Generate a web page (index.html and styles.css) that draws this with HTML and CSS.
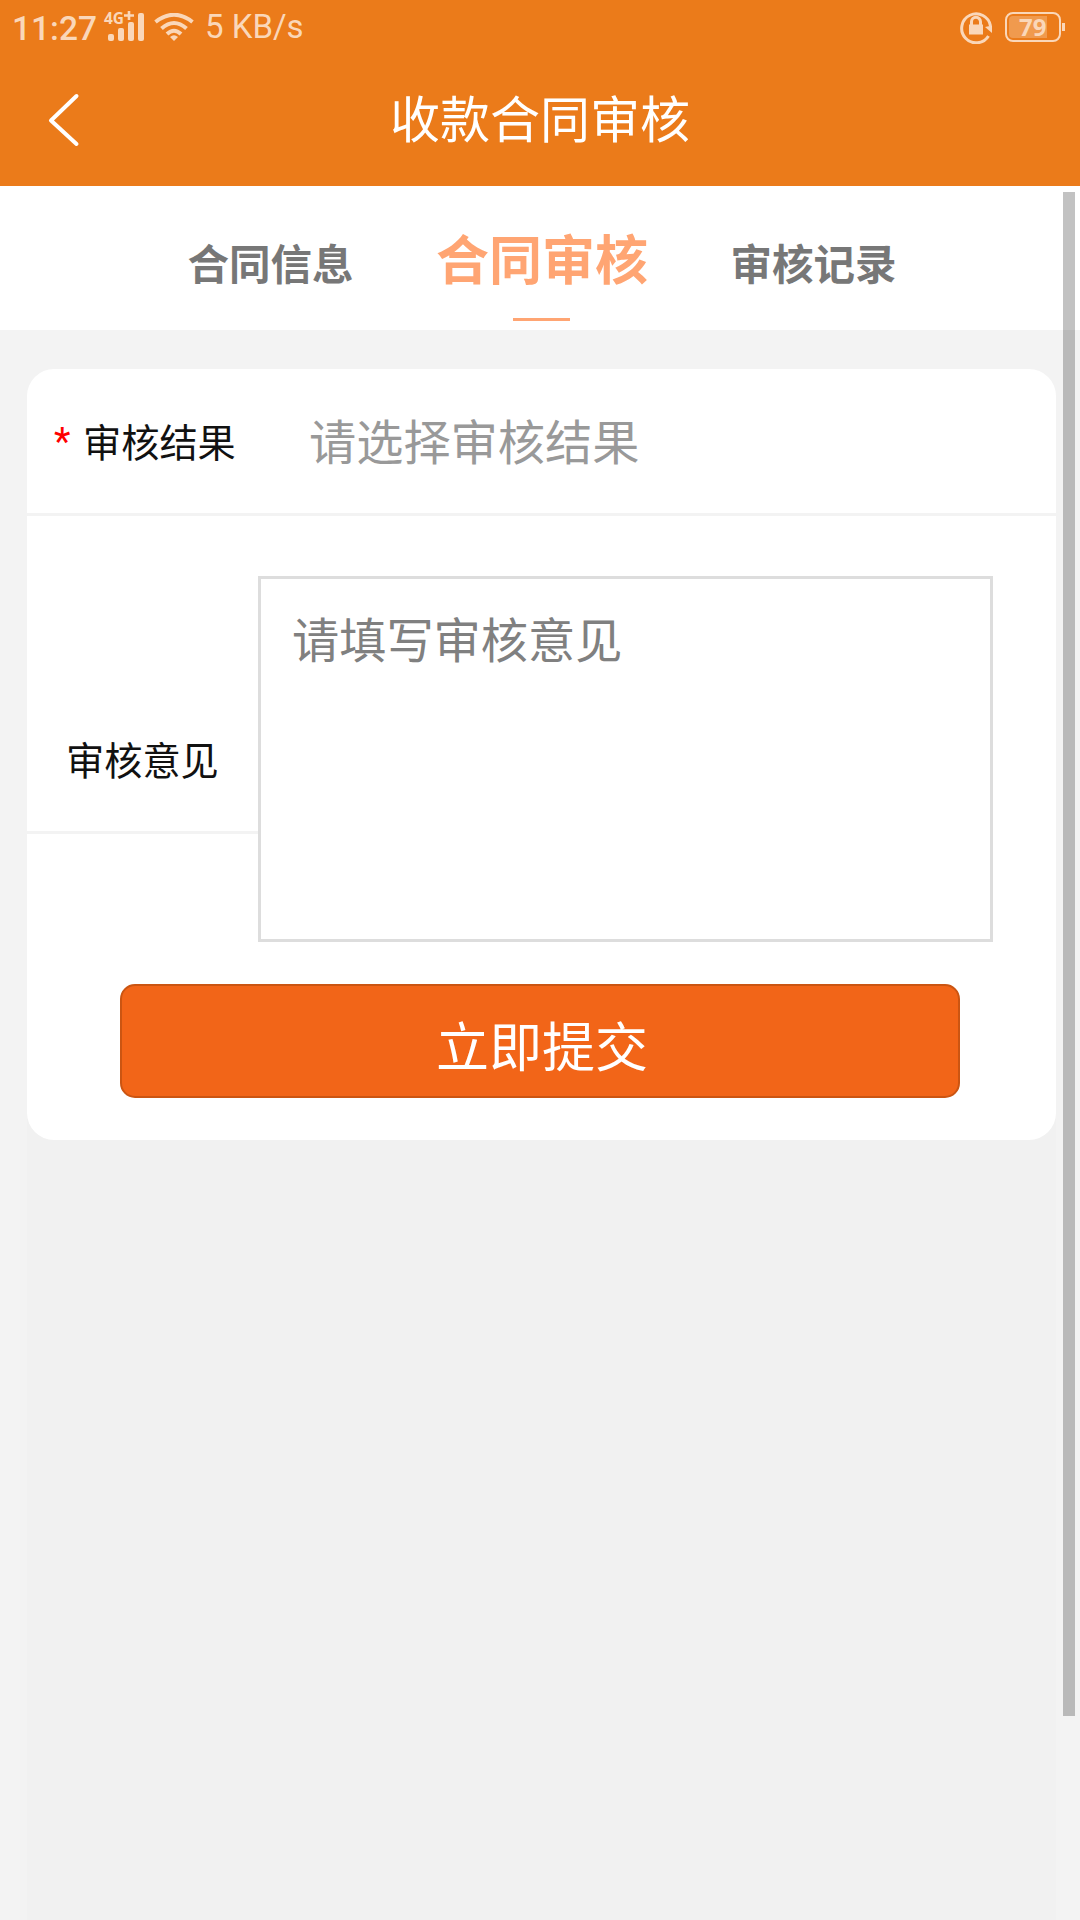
FILE: index.html
```html
<!DOCTYPE html>
<html lang="zh-CN">
<head>
<meta charset="UTF-8">
<title>收款合同审核</title>
<link rel="stylesheet" href="styles.css">
</head>
<body>
<header class="header">
  <div class="status">
    <span class="clock">11:27</span>
    <svg class="signal" width="42" height="32" viewBox="0 0 42 32" fill="currentColor">
      <text class="network" x="0" y="12.500" textLength="20" lengthAdjust="spacingAndGlyphs">4G</text>
      <path d="M20 3.200h10v2.600H20zM23.700 0h2.600v9h-2.600z"/>
      <rect x="4" y="23" width="6" height="7" rx="2"/>
      <rect x="14" y="17" width="6" height="13" rx="2"/>
      <rect x="24" y="11" width="6" height="19" rx="2"/>
      <rect x="34" y="2" width="6" height="28" rx="2"/>
    </svg>
    <svg class="wifi" width="40" height="28" viewBox="0 0 40 28" fill="none" stroke="currentColor" stroke-width="4">
      <path d="M1.500 9Q20 -5.500 38.500 9M7.500 15.500Q20 4.500 32.500 15.500M13 21Q20 14.500 27 21"/>
      <path d="M20 28l-4-4q4-3.600 8 0z" fill="currentColor" stroke="none"/>
    </svg>
    <span class="speed">5 KB/s</span>
    <svg class="lock" width="33" height="33" viewBox="0 0 33 33" fill="none" stroke="currentColor">
      <path d="M28.500 25A14.500 14.500 0 1 1 30.500 15" stroke-width="3"/>
      <path d="M25 16l7-1.500V22z" fill="currentColor" stroke="none"/>
      <path d="M11.500 14v-3.200a4.500 4.500 0 0 1 9 0V14" stroke-width="3"/>
      <rect x="9" y="13.500" width="14" height="10" fill="currentColor" stroke="none"/>
    </svg>
    <div class="battery"><span class="level">79</span></div>
  </div>
  <div class="navbar">
    <svg class="back" width="34" height="54" viewBox="0 0 34 54" fill="none" stroke="#fff" stroke-width="4" stroke-linecap="round" stroke-linejoin="round">
      <path d="M29.500 3L4 27.500L29.500 51"/>
    </svg>
    <h1 class="title">收款合同审核</h1>
  </div>
</header>
<nav class="tabs">
  <a class="tab">合同信息</a>
  <a class="tab active">合同审核</a>
  <a class="tab">审核记录</a>
</nav>
<main class="page">
  <div class="panel">
    <form class="card">
      <div class="row">
        <label class="label required">审核结果</label>
        <span class="select">请选择审核结果</span>
      </div>
      <div class="row opinion">
        <label class="label">审核意见</label>
        <div class="textarea">请填写审核意见</div>
      </div>
      <button class="submit" type="button">立即提交</button>
    </form>
  </div>
</main>
<div class="scrollbar"></div>
</body>
</html>
```
FILE: styles.css
```css
* { box-sizing: border-box; }

body {
  margin: 0;
  width: 1080px;
  height: 1920px;
  overflow: hidden;
  display: flex;
  flex-direction: column;
  background: #f3f3f3;
  font-family: Roboto, "Noto Sans CJK SC", sans-serif;
}

.header {
  height: 186px;
  background: #eb7b1a;
  color: #fff;
}

.status {
  display: flex;
  height: 54px;
  padding: 0 15px 0 12px;
  align-items: center;
  color: #fad7b9;
  line-height: 54px;
}

.clock {
  width: 92px;
  font-size: 33.5px;
  font-weight: 500;
  padding-top: 3px;
}

.signal { overflow: visible; }

.network {
  font: 700 16px/1 "Noto Sans", sans-serif;
}

.wifi { margin-left: 8px; margin-bottom: 1px; }

.speed {
  margin-left: 11px;
  font-size: 33px;
  white-space: nowrap;
}

.lock { margin-left: auto; }

.battery {
  position: relative;
  width: 56px;
  height: 30px;
  margin-left: 12px;
  margin-right: 4px;
  padding: 2px;
  border: 2px solid currentColor;
  border-radius: 8px;
}

.battery::after {
  content: "";
  position: absolute;
  left: 55px;
  top: 9px;
  width: 3px;
  height: 8px;
  background: currentColor;
}

.level {
  display: block;
  width: 38px;
  height: 22px;
  padding-left: 10px;
  border-radius: 4px 0 0 4px;
  background: #f09a4e;
  font: 700 24px/22px "Noto Sans", sans-serif;
}

.navbar {
  display: grid;
  grid-template-columns: 90px 1fr 90px;
  height: 132px;
  align-items: center;
}

.back { margin-left: 47px; margin-bottom: 1px; }

.title {
  margin: 0;
  padding-top: 2px;
  text-align: center;
  font-size: 50px;
  font-weight: 400;
  line-height: 72px;
}

.tabs {
  display: flex;
  height: 144px;
  justify-content: center;
  gap: 82.5px;
  padding-left: 4px;
  background: #fff;
}

.tab {
  color: #777;
  font-size: 41.5px;
  font-weight: 700;
  line-height: 160px;
}

.tab.active {
  display: flex;
  flex-direction: column;
  align-items: center;
  height: 135px;
  color: #ffa573;
  font-size: 53px;
  line-height: 152px;
}

.tab.active::after {
  content: "";
  width: 57px;
  height: 3px;
  margin-top: -20px;
  margin-right: 2px;
  background: currentColor;
}

.page {
  flex: 1;
  padding: 39px 24px 0 27px;
}

.panel {
  height: 100%;
  background: linear-gradient(#f3f3f3 200px, #f1f1f1 740px);
}

.card {
  width: 1029px;
  height: 771px;
  border-radius: 27px;
  background: #fff;
}

.row {
  display: flex;
  height: 147px;
  align-items: center;
  border-bottom: 3px solid #f3f3f3;
}

.label {
  width: 231px;
  padding-left: 39px;
  color: #111;
  font-size: 38.2px;
  line-height: 56px;
  white-space: nowrap;
}

.label.required {
  display: flex;
  width: 282px;
  padding-top: 5px;
  padding-left: 27px;
}

.required::before {
  content: "*";
  width: 29px;
  margin-top: -2px;
  color: #f00;
}

.select {
  padding-bottom: 3px;
  color: #999;
  font-size: 47.2px;
}

.row.opinion {
  height: 318px;
  align-items: flex-start;
  border-bottom: 0;
}

.opinion .label {
  height: 318px;
  padding-top: 218px;
  border-bottom: 3px solid #f3f3f3;
}

.textarea {
  width: 735px;
  height: 366px;
  margin-top: 60px;
  padding: 28px 31px;
  border: 3px solid #ddd;
  background: #fff;
  color: #808080;
  font-size: 47.2px;
  line-height: 70px;
}

.submit {
  display: block;
  width: 840px;
  height: 114px;
  margin: 150px 0 0 93px;
  padding: 6px 0 0 4px;
  border: 2px solid #cb5512;
  border-radius: 15px;
  background: #f26518;
  color: #fff;
  font: 400 53px/76px "Noto Sans CJK SC", sans-serif;
}

.scrollbar {
  position: absolute;
  left: 1063px;
  top: 192px;
  width: 12px;
  height: 1524px;
  background: rgba(0, 0, 0, .24);
}
```
